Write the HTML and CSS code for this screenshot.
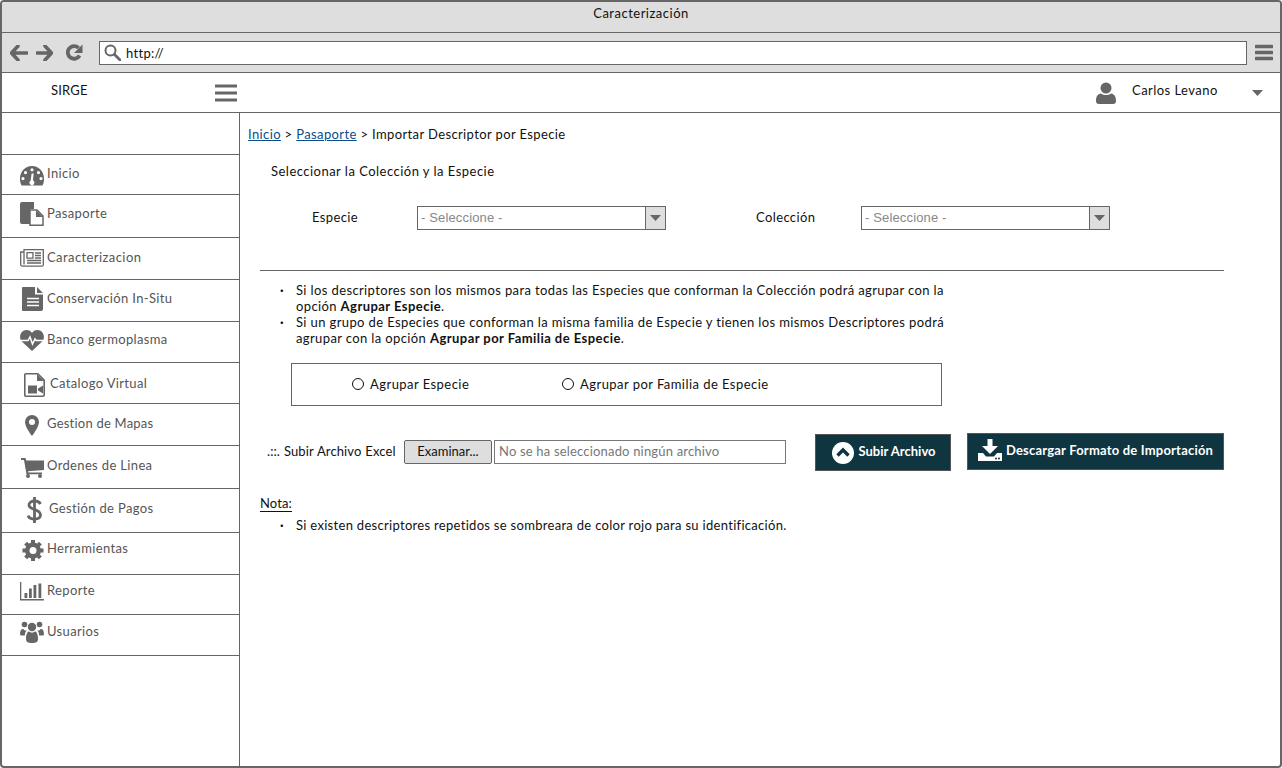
FILE: index.html
```html
<!DOCTYPE html>
<html lang="es">
<head>
<meta charset="utf-8">
<title>Caracterización</title>
<link rel="stylesheet" href="styles.css">
</head>
<body>
<div class="window">
  <div class="titlebar">Caracterización</div>
  <div class="toolbar">
    <svg class="t-back" width="18" height="16" viewBox="0 0 18 16"><path d="M8 1 1.5 8 8 15M2 8h15" fill="none" stroke="#666" stroke-width="3.6" stroke-linejoin="round" stroke-linecap="round"/></svg>
    <svg class="t-fwd" width="17" height="16" viewBox="0 0 17 16"><path d="M9 1l6.5 7L9 15M15 8H1" fill="none" stroke="#666" stroke-width="3.6" stroke-linejoin="round" stroke-linecap="round"/></svg>
    <svg class="t-reload" width="17" height="17" viewBox="0 0 17 17"><path d="M13.600 11.500A6.300 6.300 0 1 1 12.600 4" fill="none" stroke="#666" stroke-width="3.800"/><path d="M16.500 .5v8.500H8z" fill="#666"/></svg>
    <div class="address">
      <svg width="17" height="17" viewBox="0 0 17 17"><circle cx="6.500" cy="6.500" r="5" fill="none" stroke="#666" stroke-width="2"/><path d="M10.500 10.500 16 16" stroke="#666" stroke-width="2.800" stroke-linecap="round"/></svg>
      <span>http://</span>
    </div>
    <svg class="t-menu" width="18" height="17" viewBox="0 0 18 17"><path d="M1 2.500h16M1 8.500h16M1 14.500h16" stroke="#666" stroke-width="3.400" stroke-linecap="round"/></svg>
  </div>
  <header class="appbar">
    <div class="brand">SIRGE</div>
    <svg class="burger" width="22" height="18" viewBox="0 0 22 18"><path d="M0 2h22M0 9h22M0 16h22" stroke="#666" stroke-width="3.200"/></svg>
    <div class="user">
      <svg width="20" height="22" viewBox="0 0 20 22"><circle cx="10" cy="6" r="5.500" fill="#666"/><path d="M0 19c0-5 2-7 5-7.500 3 2 7 2 10 0 3 .5 5 2.500 5 7.500 0 2-1 3-3 3H3c-2 0-3-1-3-3z" fill="#666"/></svg>
      <span class="user-name">Carlos Levano</span>
      <svg class="caret" width="11" height="6" viewBox="0 0 11 6"><path d="M0 0h11L5.500 6z" fill="#666"/></svg>
    </div>
  </header>
  <div class="body">
    <nav class="sidebar">
      <ul class="menu">
        <li></li>
        <li class="it1"><svg width="24" height="20" viewBox="0 0 24 20"><path fill-rule="evenodd" fill="#666" d="M12 0C5 0 0 5.500 0 13c0 2.500.5 4.500 1.500 6.500h21c1-2 1.500-4 1.500-6.500C24 5.500 19 0 12 0zM12 2.200a1.600 1.600 0 1 1 0 3.200 1.600 1.600 0 0 1 0-3.200zM5.500 5a1.600 1.600 0 1 1 0 3.200A1.600 1.600 0 0 1 5.500 5zM18.500 5a1.600 1.600 0 1 1 0 3.200 1.600 1.600 0 0 1 0-3.200zM3 11a1.600 1.600 0 1 1 0 3.200A1.600 1.600 0 0 1 3 11zM21 11a1.600 1.600 0 1 1 0 3.200 1.600 1.600 0 0 1 0-3.200zM13.600 7.500l-.6 7.100a2.400 2.400 0 1 1-2.400.1l1-7.200z"/></svg><span>Inicio</span></li>
        <li class="it2"><svg width="24" height="24" viewBox="0 0 24 24"><path fill="#666" d="M2 0h12v7H10v15H2a2 2 0 0 1-2-2V2a2 2 0 0 1 2-2z"/><path fill="#fff" stroke="#666" stroke-width="1.500" d="M10 8h7l6 6v9.200H10z"/><path fill="#666" d="M16 8l7 7h-7z"/></svg><span>Pasaporte</span></li>
        <li class="it3"><svg width="24" height="18" viewBox="0 0 24 18"><path fill="none" stroke="#666" stroke-width="1.300" d="M4 .7h19.300v15a1.500 1.500 0 0 1-1.500 1.500H2.500A1.800 1.800 0 0 1 .7 15.400V3h3.300zM4 3v12.500"/><path fill="none" stroke="#666" stroke-width="1.300" d="M7 3.700h6v5.500H7z"/><path stroke="#666" stroke-width="1.300" d="M15 4h6M15 6.500h6M15 9h6M7 11.500h14M7 14h14"/></svg><span>Caracterizacion</span></li>
        <li class="it4"><svg width="21" height="24" viewBox="0 0 21 24"><path fill="#666" d="M1 0h12v7.500h8V22a2 2 0 0 1-2 2H1a1 1 0 0 1-1-1V1a1 1 0 0 1 1-1zM15 0l6 6h-6z"/><path stroke="#fff" stroke-width="1.500" d="M5 11.500h12M5 15h12M5 18.500h12"/></svg><span>Conservación In-Situ</span></li>
        <li class="it5"><svg width="24" height="21" viewBox="0 0 24 21"><path fill="#666" d="M12 21 1.800 11.500C-2 7 1 0 6.500 0 9 0 11 1.200 12 3c1-1.800 3-3 5.500-3C23 0 26 7 22.200 11.500z"/><path fill="none" stroke="#fff" stroke-width="1.500" d="M0 10.500h8l2-3.500 2.500 7 2.500-5 1.200 1.500H24"/></svg><span>Banco germoplasma</span></li>
        <li class="it6"><svg width="21" height="24" viewBox="0 0 21 24"><path fill="none" stroke="#666" stroke-width="1.600" d="M1.800.8h12l6.400 6.400V22a1.200 1.200 0 0 1-1.200 1.200H1.800A1 1 0 0 1 .8 22V1.800a1 1 0 0 1 1-1z"/><path fill="#666" d="M13 1l7 7h-7zM4 12.500h9v8H4zM14 15.500l5-3v8l-5-3z"/></svg><span>Catalogo Virtual</span></li>
        <li class="it7"><svg width="14" height="21" viewBox="0 0 14 21"><path fill-rule="evenodd" fill="#666" d="M7 0a7 7 0 0 1 7 7c0 4-4 10-7 14C4 17 0 11 0 7a7 7 0 0 1 7-7zm0 4a3 3 0 1 0 0 6 3 3 0 0 0 0-6z"/></svg><span>Gestion de Mapas</span></li>
        <li class="it8"><svg width="23" height="20" viewBox="0 0 23 20"><path fill="#666" d="M0 0h4.500l.8 2.500H23v9.500l-16 1.200.4 1.300H21v1.800H5.500L3 2H0z"/><circle cx="7" cy="18" r="2" fill="#666"/><circle cx="19" cy="18" r="2" fill="#666"/></svg><span>Ordenes de Linea</span></li>
        <li class="it9"><svg width="15" height="26" viewBox="0 0 15 26"><path fill="none" stroke="#666" stroke-width="2.800" d="M13.500 7c-1-2-3.500-3-6-3C4.500 4 2 5.500 2 8s2.500 3.500 5.500 4.500S13.500 15 13.500 18s-2.500 4-6 4c-3 0-5.500-1-6.500-3.500"/><path stroke="#666" stroke-width="2.800" d="M7.500 0v26"/></svg><span>Gestión de Pagos</span></li>
        <li class="it10"><svg width="22" height="21" viewBox="0 0 22 21"><circle cx="11" cy="10.500" r="5.500" fill="none" stroke="#666" stroke-width="5"/><path stroke="#666" stroke-width="4" d="M11 0v21M0.500 10.500h21M3.600 3.100l14.800 14.800M18.400 3.100 3.600 17.900"/><circle cx="11" cy="10.500" r="3.500" fill="#fff"/></svg><span>Herramientas</span></li>
        <li class="it11"><svg width="24" height="19" viewBox="0 0 24 19"><path fill="#666" d="M0 0h1.300v17H24v1.500H0zM4.500 11h2.800v5H4.500zM9 6.500h2.800V16H9zM13.500 3h2.800v13h-2.800zM18.500 1.500h2.800V16h-2.800z"/></svg><span>Reporte</span></li>
        <li class="it12"><svg width="24" height="22" viewBox="0 0 24 22"><g fill="#666"><circle cx="12" cy="6" r="4.200"/><circle cx="4.500" cy="3.500" r="2.800"/><circle cx="19.500" cy="3.500" r="2.800"/><path d="M0 13c0-3.500 1.500-5.500 3.500-5 .5 1 1.500 1.500 3 1.800C5.500 11 5 12 4.800 14.500H1.500A1.500 1.500 0 0 1 0 13zM24 13c0-3.500-1.500-5.500-3.500-5-.5 1-1.500 1.500-3 1.800 1 1.200 1.500 2.200 1.700 4.700h3.300A1.500 1.500 0 0 0 24 13z"/><path d="M6 18c0-5 1.500-7.500 3-7.500 1.500 1.500 4.500 1.500 6 0 1.500 0 3 2.500 3 7.500 0 3-2 4-6 4s-6-1-6-4z"/></g></svg><span>Usuarios</span></li>
      </ul>
    </nav>
    <main class="content">
      <p class="crumbs"><a href="#">Inicio</a> &gt; <a href="#">Pasaporte</a> &gt; Importar Descriptor por Especie</p>
      <h2 class="section-title">Seleccionar la Colección y la Especie</h2>
      <div class="selects">
        <label class="f-especie">Especie</label>
        <div class="select"><span>- Seleccione -</span><i><svg width="11" height="6" viewBox="0 0 11 6"><path d="M0 0h11L5.500 6z" fill="#666"/></svg></i></div>
        <label class="f-coleccion">Colección</label>
        <div class="select"><span>- Seleccione -</span><i><svg width="11" height="6" viewBox="0 0 11 6"><path d="M0 0h11L5.500 6z" fill="#666"/></svg></i></div>
      </div>
      <hr class="rule">
      <ul class="notes">
        <li>Si los descriptores son los mismos para todas las Especies que conforman la Colección podrá agrupar con la opción <b>Agrupar Especie</b>.</li>
        <li>Si un grupo de Especies que conforman la misma familia de Especie y tienen los mismos Descriptores podrá agrupar con la opción <b>Agrupar por Familia de Especie</b>.</li>
      </ul>
      <div class="radios">
        <span class="radio r1"><i></i>Agrupar Especie</span>
        <span class="radio r2"><i></i>Agrupar por Familia de Especie</span>
      </div>
      <div class="upload">
        <span class="up-label">.::. Subir Archivo Excel</span>
        <span class="browse">Examinar...</span>
        <span class="filename">No se ha seleccionado ningún archivo</span>
        <span class="btn btn-up"><svg width="22" height="22" viewBox="0 0 22 22"><circle cx="11" cy="11" r="11" fill="#fff"/><path d="M5.500 13.500 11 8l5.500 5.500" fill="none" stroke="#0e3540" stroke-width="3.400"/></svg><span>Subir Archivo</span></span>
        <span class="btn btn-down"><svg width="24" height="22" viewBox="0 0 24 22"><path fill="#fff" d="M9.500 0h5v7h5.500l-8 8-8-8h5.500zM0 14h5l3 3.500h8l3-3.500h5v8H0z"/><circle cx="18" cy="19.500" r="1" fill="#0e3540"/><circle cx="21" cy="19.500" r="1" fill="#0e3540"/></svg><span>Descargar Formato de Importación</span></span>
      </div>
      <p class="nota">Nota:</p>
      <ul class="notes notes-last">
        <li>Si existen descriptores repetidos se sombreara de color rojo para su identificación.</li>
      </ul>
    </main>
  </div>
</div>
</body>
</html>
```
FILE: styles.css
```css
* { box-sizing: border-box; }
html, body { margin: 0; padding: 0; height: 100%; background: #fff; }
body { font-family: Lato, "Noto Sans", sans-serif; font-size: 13px; color: #111; overflow: hidden; }
ul { list-style: none; margin: 0; padding: 0; }
p, h2 { margin: 0; font-weight: 400; font-size: 13px; }

.window { width: 1282px; height: 768px; border: 2px solid #666; border-radius: 4px; display: flex; flex-direction: column; overflow: hidden; }

.titlebar { height: 31px; flex: none; background: #dedede; border-bottom: 1px solid #666; text-align: center; padding-top: 3px; line-height: 17px; letter-spacing: .5px; }

.toolbar { height: 40px; flex: none; background: #dedede; border-bottom: 1px solid #666; display: flex; align-items: center; padding-left: 8px; }
.t-fwd { margin-left: 8px; }
.t-reload { margin-left: 13px; }
.address { margin-left: 16px; width: 1148px; height: 24px; background: #fff; border: 1px solid #666; display: flex; align-items: center; gap: 5px; padding-left: 4px; letter-spacing: .3px; }
.t-menu { margin-left: 8px; }

.appbar { height: 40px; flex: none; border-bottom: 1px solid #666; display: flex; align-items: center; position: relative; }
.brand { margin-left: 49px; width: 164px; letter-spacing: .2px; padding-bottom: 6px; }
.burger { margin-top: 0; }
.user { margin-left: auto; display: flex; align-items: center; padding-right: 17px; }
.user-name { margin-left: 16px; width: 120px; letter-spacing: .45px; padding-bottom: 6px; }
.caret { margin-top: 1px; }

.body { flex: 1; display: flex; min-height: 0; }
.sidebar { width: 237px; flex: none; border-right: 1px solid #666; box-sizing: content-box; }
.menu { display: grid; grid-template-rows: 42px 40px 43px 42px 42px 41px 41px 42px 43px 44px 42px 40px 41px; }
.menu li { border-bottom: 1px solid #666; display: flex; align-items: flex-start; color: #555; letter-spacing: .35px; padding-left: 18px; }
.menu li span { margin-left: 3px; line-height: 16px; }
.it1 svg { margin-top: 11px; } .it1 span { margin-top: 10px; }
.it2 svg { margin-top: 7px; } .it2 span { margin-top: 10px; }
.it3 svg { margin-top: 11px; } .it3 span { margin-top: 11px; letter-spacing: .42px; }
.it4 { padding-left: 20px !important; } .it4 svg { margin-top: 7px; } .it4 span { margin-left: 4px !important; margin-top: 10px; }
.it5 svg { margin-top: 8px; } .it5 span { margin-top: 9px; }
.it6 { padding-left: 22px !important; } .it6 svg { margin-top: 10px; } .it6 span { margin-left: 5px !important; margin-top: 12px; }
.it7 { padding-left: 23px !important; } .it7 svg { margin-top: 11px; } .it7 span { margin-left: 8px !important; margin-top: 11px; letter-spacing: .22px; }
.it8 { padding-left: 19px !important; } .it8 svg { margin-top: 12px; } .it8 span { margin-left: 3px !important; margin-top: 11px; }
.it9 { padding-left: 25px !important; } .it9 svg { margin-top: 8px; } .it9 span { margin-left: 7px !important; margin-top: 11px; }
.it10 { padding-left: 20px !important; } .it10 svg { margin-top: 7px; } .it10 span { margin-left: 3px !important; margin-top: 7px; }
.it11 svg { margin-top: 7px; } .it11 span { margin-top: 7px; }
.it12 svg { margin-top: 6px; } .it12 span { margin-top: 8px; }

.content { flex: 1; padding: 12px 0 0 8px; letter-spacing: .38px; }
.crumbs { line-height: 18px; color: #111; }
.crumbs a { color: #0b4c8c; text-decoration: underline; }
.section-title { margin: 19px 0 0 23px; line-height: 18px; letter-spacing: .48px; }

.selects { display: flex; align-items: center; margin-top: 26px; height: 24px; }
.f-especie { margin-left: 64px; width: 105px; padding-bottom: 3px; }
.f-coleccion { margin-left: 90px; width: 105px; padding-bottom: 3px; }
.select { width: 249px; height: 24px; border: 1px solid #666; display: flex; justify-content: space-between; color: #888; font-family: "Liberation Sans", Arial, sans-serif; letter-spacing: .15px; }
.select span { padding-left: 3px; line-height: 21px; }
.select i { width: 20px; background: #dedede; border-left: 1px solid #666; display: flex; align-items: center; justify-content: center; }

.rule { margin: 40px 56px 0 12px; border: 0; border-top: 1px solid #666; height: 0; }

.notes { margin: 11px 0 0 48px; width: 652px; line-height: 16px; }
.notes li { position: relative; }
.notes li::before { content: "·"; position: absolute; left: -16px; font-weight: 700; }
.notes b { font-weight: 700; letter-spacing: .45px; }

.radios { margin: 17px 0 0 43px; width: 651px; height: 43px; border: 1px solid #666; display: flex; align-items: center; letter-spacing: .45px; }
.radio { display: flex; align-items: center; gap: 6px; padding-bottom: 1px; }
.radio i { width: 12px; height: 12px; border: 1px solid #111; border-radius: 50%; }
.r1 { margin-left: 60px; width: 210px; }

.upload { display: flex; align-items: center; margin: 27px 0 0 19px; height: 38px; }
.up-label { width: 137px; letter-spacing: .1px; padding-bottom: 2px; word-spacing: .5px; }
.browse { width: 88px; height: 24px; background: #dedede; border: 1px solid #666; border-radius: 2px; text-align: center; line-height: 21px; letter-spacing: 0; }
.filename { width: 292px; height: 24px; margin-left: 2px; border: 1px solid #777; color: #777; padding-left: 4px; line-height: 21px; letter-spacing: .18px; }
.btn { background: #0e3540; border: 1px solid #555; color: #fff; display: flex; align-items: center; justify-content: center; gap: 4px; font-weight: 700; }
.btn span { margin-bottom: 3px; }
.btn-up { margin-left: 29px; width: 136px; height: 37px; margin-top: 1px; padding-left: 2px; letter-spacing: 0; }
.btn-down { margin-left: 16px; width: 257px; height: 37px; margin-top: -1px; letter-spacing: .2px; }
.btn-down svg { margin-bottom: 3px; }

.nota { margin: 25px 0 0 12px; width: max-content; line-height: 15px; border-bottom: 1px solid #111; letter-spacing: .1px; }
.notes-last { margin-top: 5px; letter-spacing: .3px; }
```
